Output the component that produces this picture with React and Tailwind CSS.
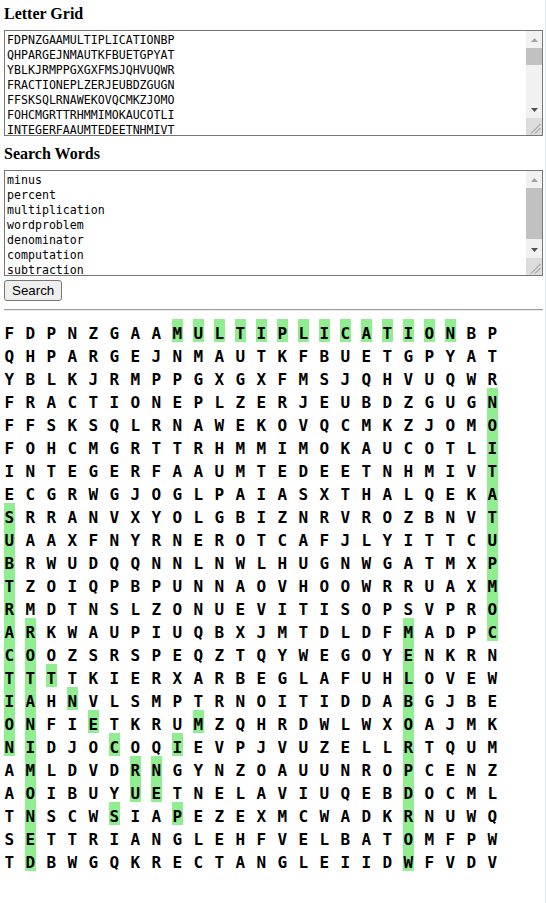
import React from "react";

const rows = [
  "FDPNZGAAMULTIPLICATIONBP",
  "QHPARGEJNMAUTKFBUETGPYAT",
  "YBLKJRMPPGXGXFMSJQHVUQWR",
  "FRACTIONEPLZERJEUBDZGUGN",
  "FFSKSQLRNAWEKOVQCMKZJOMO",
  "FOHCMGRTTRHMMIMOKAUCOTLI",
  "INTEGERFAAUMTEDEETNHMIVT",
  "ECGRWGJOGLPAIASXTHALQEKA",
  "SRRANVXYOLGBIZNRVROZBNVT",
  "UAAXFNYRNEROTCAFJLYITTCU",
  "BRWUDQQNNLNWLHUGNWGATMXP",
  "TZOIQPBPUNNAOVHOOWRRUAXM",
  "RMDTNSLZONUEVITISOPSVPRO",
  "ARKWAUPIUQBXJMTDLDFMADPC",
  "COOZSRSPEQZTQYWEGOYENKRN",
  "TTTTKIERXARBEGLAFUHLOVEW",
  "IAHNVLSMPTRNOITIDDABGJBE",
  "ONFIETKRUMZQHRDWLWXOAJMK",
  "NIDJOCOQIEVPJVUZELLRTQUM",
  "AMLDVDRNGYNZOAUUNROPCENZ",
  "AOIBUYUETNELAVIUQEBDOCML",
  "TNSCWSIAPEZEXMCWADKRNUWQ",
  "SETTRIANGLEHFVELBATOMFPW",
  "TDBWGQKRECTANGLEIIDWFVDV",
];

const words = [
  "minus",
  "percent",
  "multiplication",
  "wordproblem",
  "denominator",
  "computation",
  "subtraction",
  "",
  "",
];

function buildHighlights() {
  const s = new Set();
  const add = (r, c) => s.add(r + "," + c);
  for (let c = 8; c <= 21; c++) add(0, c); // multiplication
  for (let r = 3; r <= 13; r++) add(r, 23); // computation
  for (let r = 8; r <= 18; r++) add(r, 0); // subtraction
  for (let r = 13; r <= 23; r++) add(r, 1); // denominator
  for (let r = 13; r <= 23; r++) add(r, 19); // wordproblem
  for (let i = 0; i < 7; i++) add(15 + i, 2 + i); // percent
  for (let i = 0; i < 5; i++) add(17 + i, 9 - i); // minus
  return s;
}

const hl = buildHighlights();

function FakeScrollbar({ thumbClass }) {
  return (
    <div className="absolute top-[1px] right-[1px] bottom-[1px] w-[16px] flex flex-col bg-[#f1f1f1] pointer-events-none">
      <div className="h-[17px] flex items-center justify-center">
        <svg width="7" height="4" viewBox="0 0 7 4">
          <polygon points="0,4 3.5,0 7,4" fill="#a3a3a3" />
        </svg>
      </div>
      <div className="flex-1 flex flex-col">
        <div className={"bg-[#c1c1c1] " + thumbClass} />
      </div>
      <div className="h-[17px] flex items-center justify-center">
        <svg width="7" height="4" viewBox="0 0 7 4">
          <polygon points="0,0 3.5,4 7,0" fill="#505050" />
        </svg>
      </div>
      <div className="h-[17px] bg-[#dcdcdc] flex items-end justify-end">
        <svg width="16" height="17" viewBox="0 0 16 17">
          <line x1="14.5" y1="6" x2="5" y2="15.5" stroke="#8a8a8a" strokeWidth="1" />
          <line x1="14.5" y1="10" x2="9" y2="15.5" stroke="#8a8a8a" strokeWidth="1" />
        </svg>
      </div>
    </div>
  );
}

const taClass =
  "block w-[539px] h-[106px] border border-[#767676] bg-white text-black pl-[2px] pr-[18px] py-[2px] resize-none overflow-hidden whitespace-pre text-[11.6px] leading-[15px] [font-family:'DejaVu_Sans_Mono',monospace]";

const headClass =
  "text-[16px] leading-[18px] font-bold [font-family:'Liberation_Serif',serif]";

export default function App() {
  return (
    <div className="flex w-[546px] min-h-[903px] bg-white">
      <div className="w-[545px] pl-[4px] pt-[5px] text-black">
        <div className={headClass}>Letter Grid</div>
        <div className="relative mt-[7px] w-[539px] h-[106px]">
          <textarea
            className={taClass}
            defaultValue={rows.join("\n")}
            spellCheck={false}
          />
          <FakeScrollbar thumbClass="h-[17px]" />
        </div>
        <div className={"mt-[9px] " + headClass}>Search Words</div>
        <div className="relative mt-[7px] w-[539px] h-[106px]">
          <textarea
            className={taClass}
            defaultValue={words.join("\n")}
            spellCheck={false}
          />
          <FakeScrollbar thumbClass="h-[51px]" />
        </div>
        <button className="mt-[4px] block h-[21px] px-[7px] border border-[#767676] rounded-[3px] bg-[#efefef] text-[13.33px] leading-[17px] text-black [font-family:'Liberation_Sans',Arial,sans-serif]">
          Search
        </button>
        <div className="mt-[8px] w-[539px] border-t border-[#9a9a9a] border-b border-b-[#eeeeee]" />
        <div className="mt-[8px] flex flex-col [font-family:'DejaVu_Sans_Mono',monospace] font-bold text-[16px] text-black">
          {rows.map((row, r) => (
            <div key={r} className="flex h-[23px]">
              {row.split("").map((ch, c) => (
                <div key={c} className="w-[21px] h-[23px] shrink-0">
                  <span
                    className={
                      "block w-[10.7px] h-[23px] pt-[7px] leading-[16px] text-center " +
                      (hl.has(r + "," + c) ? "bg-[#90ee90]" : "")
                    }
                  >
                    {ch}
                  </span>
                </div>
              ))}
            </div>
          ))}
        </div>
      </div>
      <div className="w-[1px] bg-[#d9e4f5]" />
    </div>
  );
}
